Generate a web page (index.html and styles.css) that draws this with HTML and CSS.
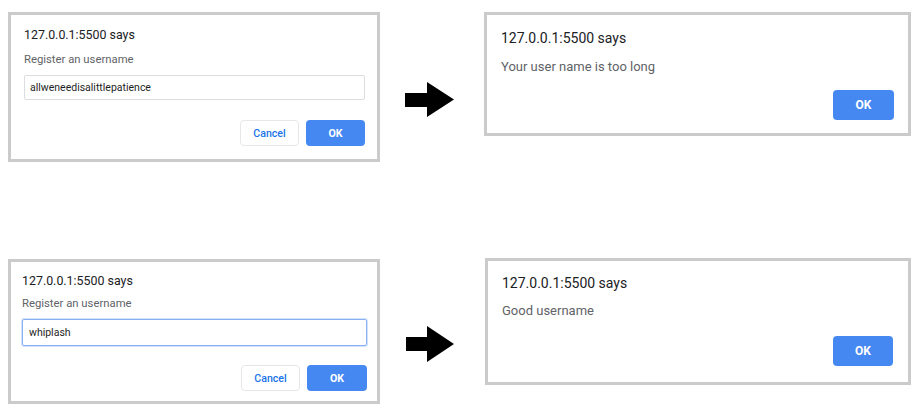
FILE: index.html
```html
<!DOCTYPE html>
<html>
<head>
<meta charset="utf-8">
<link rel="stylesheet" href="styles.css">
</head>
<body>
<div class="page">
  <div class="row row-top">
    <div class="dialog prompt prompt-a">
      <div class="title">127.0.0.1:5500 says</div>
      <div class="msg">Register an username</div>
      <div class="field">allweneedisalittlepatience</div>
      <div class="actions">
        <div class="btn cancel">Cancel</div>
        <div class="btn ok">OK</div>
      </div>
    </div>
    <svg class="arrow arrow-a" width="49" height="35" viewBox="0 0 49 35"><polygon points="0,11 22,11 22,0 49,17.5 22,35 22,25 0,25" fill="#000"/></svg>
    <div class="dialog alert alert-a">
      <div class="title">127.0.0.1:5500 says</div>
      <div class="msg">Your user name is too long</div>
      <div class="actions">
        <div class="btn ok">OK</div>
      </div>
    </div>
  </div>
  <div class="row row-bottom">
    <div class="dialog prompt prompt-b">
      <div class="title">127.0.0.1:5500 says</div>
      <div class="msg">Register an username</div>
      <div class="field focused">whiplash</div>
      <div class="actions">
        <div class="btn cancel">Cancel</div>
        <div class="btn ok">OK</div>
      </div>
    </div>
    <svg class="arrow arrow-b" width="48" height="36" viewBox="0 0 48 36"><polygon points="0,11 21,11 21,0 48,18 21,36 21,25 0,25" fill="#000"/></svg>
    <div class="dialog alert alert-b">
      <div class="title">127.0.0.1:5500 says</div>
      <div class="msg">Good username</div>
      <div class="actions">
        <div class="btn ok">OK</div>
      </div>
    </div>
  </div>
</div>
</body>
</html>
```
FILE: styles.css
```css
html, body {
  margin: 0;
  padding: 0;
  background: #ffffff;
}
body {
  font-family: Roboto, "Liberation Sans", Arial, sans-serif;
  color: #202124;
}
.page {
  padding-top: 12px;
}
.row {
  display: flex;
  align-items: flex-start;
}
.row-bottom {
  margin-top: 96px;
}
.dialog {
  box-sizing: border-box;
  border: 3px solid #cbcbcb;
  background: #fff;
  display: flex;
  flex-direction: column;
}
.prompt {
  margin-left: 8px;
  width: 372px;
}
.prompt .title {
  font-size: 12.4px;
  line-height: 15px;
}
.prompt .msg {
  font-size: 11.3px;
  line-height: 14px;
  color: #5f6368;
}
.prompt-a {
  padding: 12px 12px 13px 13px;
}
.prompt-a .msg { margin-top: 11px; }
.prompt-a .field { margin-top: 8px; height: 25px; }
.prompt-a .actions { margin-top: 20px; }
.prompt-a .btn { width: 59px; }

.prompt-b {
  margin-top: 1px;
  padding: 11px 10px 10px 11px;
}
.prompt-b .msg { margin-top: 9px; }
.prompt-b .field { margin-top: 8px; height: 27px; }
.prompt-b .actions { margin-top: 19px; }
.prompt-b .btn { width: 59px; }
.prompt-b .btn.ok { width: 60px; }

.field {
  box-sizing: border-box;
  border: 1px solid #dcdde0;
  border-radius: 2px;
  padding-left: 5px;
  font-size: 10.5px;
  font-weight: 400;
  color: #1f1f1f;
  display: flex;
  align-items: center;
}
.field.focused {
  border: 1px solid #8ab0f2;
  box-shadow: 0 0 0 1px #d3e2fb;
  padding-left: 6px;
}
.actions {
  display: flex;
  justify-content: flex-end;
  gap: 7px;
}
.btn {
  box-sizing: border-box;
  height: 26px;
  border-radius: 4px;
  display: flex;
  align-items: center;
  justify-content: center;
  font-size: 10.6px;
  font-weight: 500;
}
.btn.cancel {
  border: 1px solid #e6e7ea;
  color: #1a73e8;
  background: #fff;
}
.btn.ok {
  background: #4688f2;
  color: #fff;
  font-weight: 700;
}
.arrow {
  flex: none;
  display: block;
}
.arrow-a {
  margin-left: 25px;
  margin-top: 70px;
}
.arrow-b {
  margin-left: 26px;
  margin-top: 68px;
}
.alert {
  width: 427px;
}
.alert .title {
  font-size: 14px;
  line-height: 17px;
}
.alert .msg {
  font-size: 13px;
  line-height: 16px;
  color: #5f6368;
}
.alert .btn {
  height: 30px;
  font-size: 12px;
}
.alert-a {
  margin-left: 30px;
  padding: 15px 14px 13px 14px;
}
.alert-a .msg { margin-top: 11.5px; }
.alert-a .actions { margin-top: 15.5px; }
.alert-a .btn { width: 61px; }

.alert-b {
  margin-left: 31px;
  width: 426px;
  padding: 14px 15px 16px 14px;
}
.alert-b .msg { margin-top: 11px; }
.alert-b .actions { margin-top: 16.5px; }
.alert-b .btn { width: 60px; }
```
